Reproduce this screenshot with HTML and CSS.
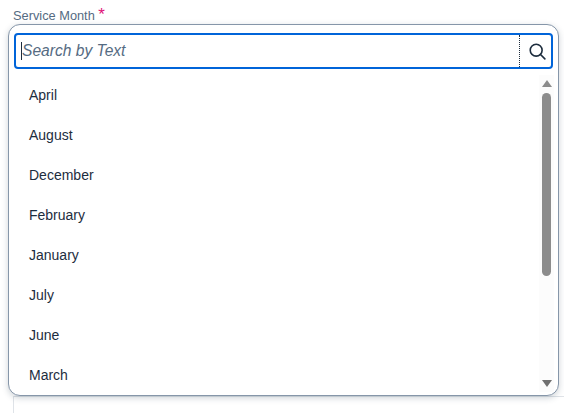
FILE: index.html
```html
<!DOCTYPE html>
<html lang="en">
<head>
<meta charset="utf-8">
<title>Service Month</title>
<link rel="stylesheet" href="styles.css">
</head>
<body>
<div class="page">
  <div class="label">Service Month <span class="req">*</span></div>
  <div class="under"></div>
  <div class="popover">
    <div class="search">
      <div class="field"><span class="caret"></span><span class="placeholder">Search by Text</span></div>
      <div class="btn">
        <svg width="17" height="17" viewBox="0 0 18 18" fill="none"><circle cx="7.6" cy="7.6" r="6.3" stroke="#1d2d3e" stroke-width="1.7"/><path d="M12.2 12.2l4.6 4.6" stroke="#1d2d3e" stroke-width="1.7" stroke-linecap="round"/></svg>
      </div>
    </div>
    <div class="body">
      <ul class="list">
        <li>April</li><li>August</li><li>December</li><li>February</li><li>January</li><li>July</li><li>June</li><li>March</li>
      </ul>
      <div class="scroll">
        <span class="arrow up"></span>
        <span class="thumb"></span>
        <span class="arrow down"></span>
      </div>
    </div>
  </div>
</div>
</body>
</html>
```
FILE: styles.css
```css
* { box-sizing: border-box; }
html, body { margin: 0; padding: 0; background: #fff; }
.page { position: relative; width: 564px; height: 413px; overflow: hidden; font-family: "Liberation Sans", Arial, sans-serif; color: #1d2d3e; }
.label { padding: 8px 0 0 13px; font-size: 12.8px; line-height: 15px; color: #556b82; }
.req { color: #df1278; font-size: 17px; line-height: 10px; }
.under { position: absolute; left: 13px; top: 396px; right: 0; height: 17px; border-left: 1px solid #dfe3e8; border-top: 1px solid #dfe3e8; }
.popover { position: absolute; left: 8px; top: 24px; width: 551px; height: 372px; background: #fff; border: 1px solid #8696a9; border-radius: 12px; box-shadow: 0 2px 6px rgba(34,53,72,.22); padding: 8px 5px 0; }
.search { display: flex; width: 539px; height: 36px; border: 2px solid #0064d9; border-radius: 4px; }
.field { flex: 1; display: flex; align-items: center; padding-left: 5px; border-right: 1px dotted #1d2d3e; }
.caret { width: 1px; height: 18px; background: #1d2d3e; }
.placeholder { font-size: 15.6px; font-style: italic; color: #556b82; }
.btn { width: 31px; padding-left: 3px; display: flex; align-items: center; justify-content: center; }
.body { display: flex; justify-content: space-between; margin: 6px -1px 0 2px; }
.list { list-style: none; margin: 0; padding: 0; flex: 1; }
.list li { height: 40px; line-height: 40px; font-size: 14px; padding-left: 13px; }
.scroll { width: 15px; height: 317px; background: #fcfcfc; display: flex; flex-direction: column; align-items: center; padding-top: 5px; }
.arrow { width: 0; height: 0; border-left: 5px solid transparent; border-right: 5px solid transparent; }
.up { border-bottom: 7px solid #8c8c8c; }
.down { border-top: 7px solid #707070; margin-top: auto; margin-bottom: 5px; }
.thumb { width: 9px; height: 183px; margin-top: 6px; background: #8c8c8c; border-radius: 5px; }
```
